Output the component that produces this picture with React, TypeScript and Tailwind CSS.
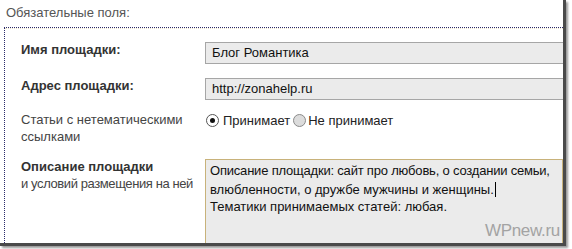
import React from "react";

function Radio({ checked }: { checked?: boolean }) {
    return (
        <span
            className={`inline-flex h-[13px] w-[13px] shrink-0 items-center justify-center rounded-full border ${
                checked ? "border-[#555] bg-white" : "border-[#8a8a8a] bg-[#dcdcdc]"
            }`}
        >
            {checked && <span className="h-[5px] w-[5px] rounded-full bg-[#111]" />}
        </span>
    );
}

function TextInput({ value }: { value: string }) {
    return (
        <div className="h-[22px] border-y border-l border-[#a6a6a6] bg-[#ebebeb] pl-[6px] text-[13px] leading-[20px] text-[#111]">
            {value}
        </div>
    );
}

export default function App() {
    return (
        <div className="h-[249px] w-[572px] overflow-hidden bg-white font-['Liberation_Sans',Arial,sans-serif]">
            <div className="relative h-[246px] w-[566px] overflow-hidden border-r-[3px] border-b-[3px] border-[#4a4a4a] shadow-[2px_2px_2px_#9a9a9a]">
                <div className="pt-[4px] pl-[6px] text-[13px] leading-[17px] text-[#555]">
                    Обязательные поля:
                </div>

                <div className="mt-[6px] ml-[4px] h-[300px] border-t border-l border-dotted border-[#2a2a6a]">
                    <div className="border-t border-dotted border-[#efe7cf]" />
                    <div className="grid grid-cols-[184px_1fr] items-start pt-[13px] pl-[16px] text-[13px] leading-[17px]">
                        <div className="mt-[-1px] font-bold text-[#333]">Имя площадки:</div>
                        <TextInput value="Блог Романтика" />

                        <div className="mt-[13px] font-bold text-[#333]">Адрес площадки:</div>
                        <div className="mt-[14px]">
                            <TextInput value="http://zonahelp.ru" />
                        </div>

                        <div className="mt-[11px] text-[#444]">
                            Статьи с нетематическими
                            <br />
                            ссылками
                        </div>
                        <div className="mt-[12px] flex h-[17px] items-center text-[#222]">
                            <div className="ml-[1px] flex">
                                <Radio checked />
                            </div>
                            <span className="ml-[4px]">Принимает</span>
                            <div className="ml-[3px] flex">
                                <Radio />
                            </div>
                            <span className="ml-[2px]">Не принимает</span>
                        </div>

                        <div className="mt-[13px] text-[#444]">
                            <div className="font-bold text-[#333]">Описание площадки</div>
                            <div className="tracking-[-0.4px] whitespace-nowrap">и условий размещения на ней</div>
                        </div>
                        <div className="mt-[14px] h-[100px] border border-[#c8b27a] bg-[#ebebeb] pt-[2px] pl-[4px] text-[#111]">
                            <span className="tracking-[-0.2px]">
                                Описание площадки: сайт про любовь, о создании семьи,
                            </span>
                            <br />
                            влюбленности, о дружбе мужчины и женщины.
                            <span className="ml-[1px] inline-block h-[15px] w-[1px] translate-y-[3px] bg-black" />
                            <br />
                            Тематики принимаемых статей: любая.
                        </div>
                    </div>
                </div>

                <div className="absolute right-[3px] bottom-[1px] text-[17px] leading-[22px] tracking-[-0.3px] text-[#a3a3a3]">
                    WPnew.ru
                </div>
            </div>
        </div>
    );
}
